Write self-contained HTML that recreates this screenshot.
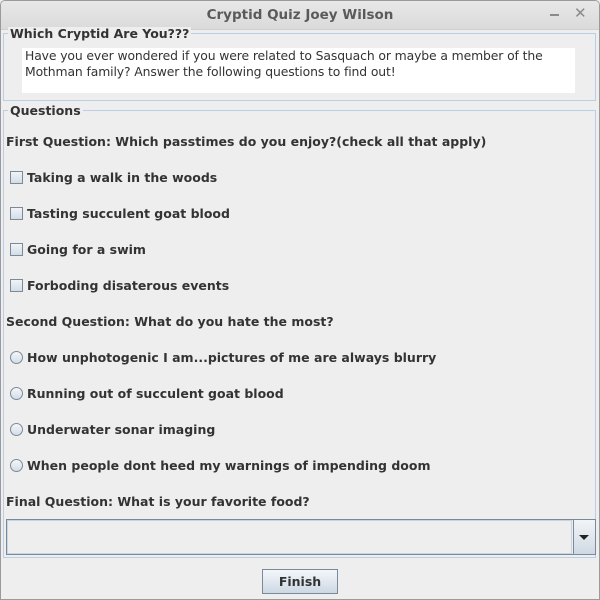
<!DOCTYPE html>
<html><head><style>
*{margin:0;padding:0;box-sizing:border-box}
body{width:600px;height:600px;background:#eeeeee;position:relative;overflow:hidden;font-family:"DejaVu Sans","Liberation Sans",sans-serif;color:#333}
.t{position:absolute;font-size:12.5px;font-weight:bold;white-space:nowrap;line-height:14px;color:#333}
.cb{position:absolute;left:10px;width:13px;height:13px;border:1px solid #7a8a99;background:linear-gradient(#f0f4f8,#d4dce6)}
.rb{position:absolute;left:10px;width:13px;height:13px;border:1px solid #7a8a99;border-radius:50%;background:linear-gradient(#f4f7fa,#d4dce6)}
.grp{position:absolute;border:1px solid #b8cfe5}
.gt{position:absolute;background:#eeeeee;padding:0 2px;font-weight:bold;font-size:12.5px;color:#333;line-height:14px}
</style></head><body>
<div style="position:absolute;left:0;top:0;width:600px;height:600px;border:1px solid #9a9a9a;border-radius:5px 5px 0 0"></div>
<div style="position:absolute;left:1px;top:1px;width:598px;height:29px;background:linear-gradient(#e8e8e8,#dadada);border-radius:4px 4px 0 0;border-bottom:1px solid #cfcfcf"></div>
<div style="position:absolute;left:0;top:7px;width:600px;text-align:center;font-weight:bold;font-size:13.5px;color:#5a5a5a">Cryptid Quiz Joey Wilson</div>
<div style="position:absolute;left:550px;top:14px;width:9px;height:2px;background:#8a8a8a"></div>
<div style="position:absolute;left:574px;top:4px;font-size:15px;font-weight:bold;color:#8a8a8a">✕</div>

<div class="grp" style="left:3px;top:33px;width:593px;height:68px"></div>
<div class="gt" style="left:8px;top:27px">Which Cryptid Are You???</div>
<div style="position:absolute;left:22px;top:48px;width:553px;height:45px;background:#fff;font-size:12.4px;line-height:16px;padding:0 0 0 3px;color:#333;white-space:nowrap;letter-spacing:-0.12px">Have you ever wondered if you were related to Sasquach or maybe a member of the<br>Mothman family? Answer the following questions to find out!</div>

<div class="grp" style="left:3px;top:110px;width:593px;height:448px"></div>
<div class="gt" style="left:8px;top:104px">Questions</div>

<div class="t" style="left:6px;top:135px">First Question: Which passtimes do you enjoy?(check all that apply)</div>
<div class="cb" style="top:171px"></div><div class="t" style="left:27px;top:171px">Taking a walk in the woods</div>
<div class="cb" style="top:207px"></div><div class="t" style="left:27px;top:207px">Tasting succulent goat blood</div>
<div class="cb" style="top:243px"></div><div class="t" style="left:27px;top:243px">Going for a swim</div>
<div class="cb" style="top:279px"></div><div class="t" style="left:27px;top:279px">Forboding disaterous events</div>
<div class="t" style="left:6px;top:315px">Second Question: What do you hate the most?</div>
<div class="rb" style="top:351px"></div><div class="t" style="left:27px;top:351px">How unphotogenic I am...pictures of me are always blurry</div>
<div class="rb" style="top:387px"></div><div class="t" style="left:27px;top:387px">Running out of succulent goat blood</div>
<div class="rb" style="top:423px"></div><div class="t" style="left:27px;top:423px">Underwater sonar imaging</div>
<div class="rb" style="top:459px"></div><div class="t" style="left:27px;top:459px">When people dont heed my warnings of impending doom</div>
<div class="t" style="left:6px;top:495px">Final Question: What is your favorite food?</div>

<div style="position:absolute;left:6px;top:519px;width:590px;height:36px;border:1px solid #7a8a99;background:#eeeeee"></div>
<div style="position:absolute;left:7px;top:520px;width:565px;height:34px;border:1px solid #c8d4e0"></div>
<div style="position:absolute;left:573px;top:520px;width:22px;height:34px;background:linear-gradient(#f2f5f8,#cfd9e4);border-left:1px solid #7a8a99"></div>
<div style="position:absolute;left:579px;top:535px;width:0;height:0;border-left:5px solid transparent;border-right:5px solid transparent;border-top:5px solid #222"></div>

<div style="position:absolute;left:262px;top:569px;width:76px;height:25px;border:1px solid #7a8a99;background:linear-gradient(#f4f7fa,#cdd8e4);text-align:center;font-weight:bold;font-size:12.5px;line-height:23px;color:#333">Finish</div>
</body></html>
